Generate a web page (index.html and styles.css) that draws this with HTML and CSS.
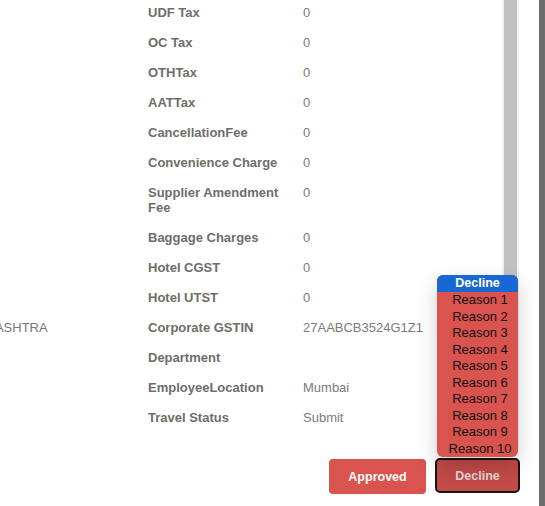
FILE: index.html
```html
<!DOCTYPE html>
<html>
<head>
<meta charset="utf-8">
<link rel="stylesheet" href="styles.css">
</head>
<body>
<div class="screen">
  <div class="modal">
    <div class="scroll-area">
      <div class="content">
        <div class="details">
          <div class="row"><div class="cell"></div><div class="label">UDF Tax</div><div class="value">0</div></div>
          <div class="row"><div class="cell"></div><div class="label">OC Tax</div><div class="value">0</div></div>
          <div class="row"><div class="cell"></div><div class="label">OTHTax</div><div class="value">0</div></div>
          <div class="row"><div class="cell"></div><div class="label">AATTax</div><div class="value">0</div></div>
          <div class="row"><div class="cell"></div><div class="label">CancellationFee</div><div class="value">0</div></div>
          <div class="row"><div class="cell"></div><div class="label">Convenience Charge</div><div class="value">0</div></div>
          <div class="row"><div class="cell"></div><div class="label">Supplier Amendment Fee</div><div class="value">0</div></div>
          <div class="row"><div class="cell"></div><div class="label">Baggage Charges</div><div class="value">0</div></div>
          <div class="row"><div class="cell"></div><div class="label">Hotel CGST</div><div class="value">0</div></div>
          <div class="row"><div class="cell"></div><div class="label">Hotel UTST</div><div class="value">0</div></div>
          <div class="row"><div class="cell">MAHARASHTRA</div><div class="label">Corporate GSTIN</div><div class="value">27AABCB3524G1Z1</div></div>
          <div class="row"><div class="cell"></div><div class="label">Department</div><div class="value"></div></div>
          <div class="row"><div class="cell"></div><div class="label">EmployeeLocation</div><div class="value">Mumbai</div></div>
          <div class="row"><div class="cell"></div><div class="label">Travel Status</div><div class="value">Submit</div></div>
        </div>
      </div>
      <div class="scrollbar"><div class="thumb"></div></div>
    </div>
    <div class="footer">
      <button class="btn btn-approve">Approved</button>
      <button class="btn btn-decline">Decline</button>
    </div>
    <div class="dropdown">
      <div class="dd-head">Decline</div>
      <div class="dd-item">Reason 1</div>
      <div class="dd-item">Reason 2</div>
      <div class="dd-item">Reason 3</div>
      <div class="dd-item">Reason 4</div>
      <div class="dd-item">Reason 5</div>
      <div class="dd-item">Reason 6</div>
      <div class="dd-item">Reason 7</div>
      <div class="dd-item">Reason 8</div>
      <div class="dd-item">Reason 9</div>
      <div class="dd-item">Reason 10</div>
    </div>
  </div>
  <div class="backdrop"></div>
</div>
</body>
</html>
```
FILE: styles.css
```css
html, body {
  margin: 0;
  padding: 0;
  background: #fff;
  overflow: hidden;
}
body {
  font-family: "Liberation Sans", Arial, sans-serif;
  font-size: 13px;
}
.screen {
  display: flex;
  width: 545px;
  height: 506px;
}
.modal {
  position: relative;
  flex: 1;
  display: flex;
  flex-direction: column;
  padding-right: 20px;
  background: #fff;
}
.backdrop {
  width: 6px;
  background: #6e6e6e;
}
.scroll-area {
  display: flex;
  height: 448px;
  overflow: hidden;
}
.content {
  flex: 1;
  overflow: hidden;
}
.details {
  margin-top: -3px;
  margin-left: -52px;
}
.row {
  display: grid;
  grid-template-columns: 200px 155px 1fr;
  padding: 7.5px 0;
  line-height: 15px;
}
.cell {
  color: #777;
  white-space: nowrap;
}
.label {
  font-weight: bold;
  color: #6e6e69;
  padding-right: 10px;
}
.value {
  color: #7b7b78;
}
.scrollbar {
  width: 17px;
  background: #f1f1f1;
  display: flex;
  justify-content: center;
}
.thumb {
  width: 13px;
  height: 330px;
  background: #c1c1c1;
}
.footer {
  display: flex;
  justify-content: flex-end;
  align-items: flex-start;
  gap: 9px;
  padding-top: 10px;
  margin-right: -1px;
}
.btn {
  font-family: "Liberation Sans", Arial, sans-serif;
  font-size: 12.5px;
  font-weight: bold;
  height: 35px;
  border-radius: 4px;
  cursor: pointer;
}
.btn-approve {
  width: 97px;
  margin-top: 1px;
  background: #d9534f;
  color: #fff;
  border: none;
}
.btn-decline {
  width: 85px;
  background: #c24a48;
  color: #e3d3d3;
  border: 2px solid #151515;
  border-radius: 5px;
}
.dropdown {
  position: absolute;
  top: 275px;
  left: 437px;
  width: 81px;
  background: #d9534f;
  border-radius: 6px;
  overflow: hidden;
  box-shadow: 0 8px 20px rgba(0, 0, 0, 0.2);
  text-align: center;
}
.dd-head {
  background: #1967d2;
  color: #fff;
  font-weight: bold;
  font-size: 12.5px;
  line-height: 17px;
}
.dd-item {
  color: #111;
  font-size: 13px;
  line-height: 16.5px;
  padding-left: 5px;
}
```
